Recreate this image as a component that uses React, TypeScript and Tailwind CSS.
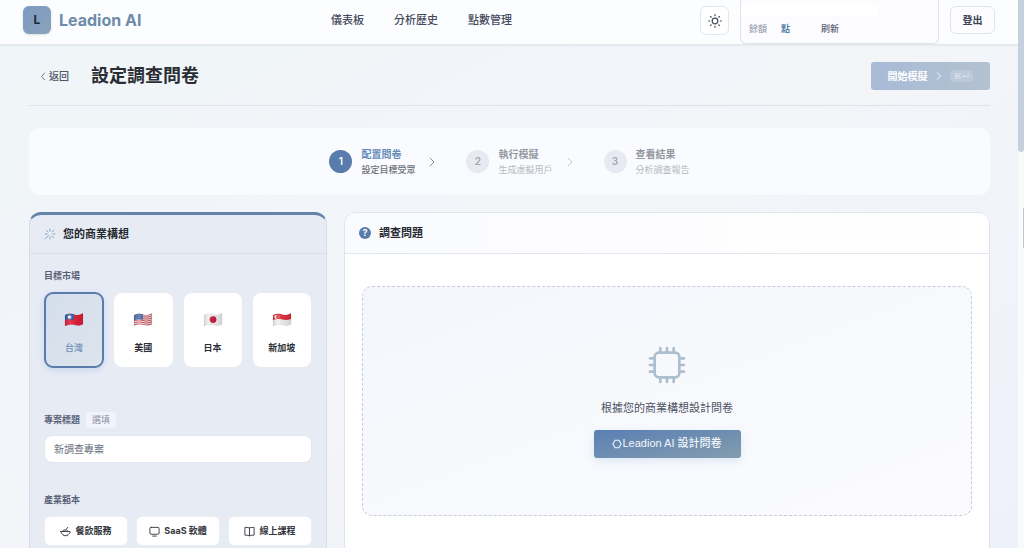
import type { ReactNode } from "react";

const waveTop = "M1 3.2C4 1.6 7 1.4 10 2.4S16 3 19 1.2V12.2C16 14 13 13.6 10 12.8S4 12.4 1 14Z";

function Flag({ id, children }: { id: string; children: ReactNode }) {
  return (
    <svg viewBox="0 0 20 15" className="h-[15px] w-5" aria-hidden="true">
      <defs>
        <clipPath id={`clip-${id}`}>
          <path d={waveTop} />
        </clipPath>
        <linearGradient id={`shade-${id}`} x1="0" x2="1" y1="0" y2="0">
          <stop offset="0" stopColor="#000" stopOpacity="0.14" />
          <stop offset="0.3" stopColor="#fff" stopOpacity="0.12" />
          <stop offset="0.65" stopColor="#000" stopOpacity="0.06" />
          <stop offset="1" stopColor="#000" stopOpacity="0.14" />
        </linearGradient>
      </defs>
      <g clipPath={`url(#clip-${id})`}>
        {children}
        <rect width="20" height="15" fill={`url(#shade-${id})`} />
      </g>
      <path d={waveTop} fill="none" stroke="#000" strokeOpacity="0.12" strokeWidth="0.5" />
    </svg>
  );
}

const markets = [
  {
    name: "台灣",
    flag: (
      <Flag id="tw">
        <rect width="20" height="15" fill="#e3203c" />
        <path d="M0 0H10V8C7 7 4 7 0 8.6Z" fill="#2d5aa8" />
        <circle cx="5.4" cy="5" r="1.5" fill="#fff" />
        <circle cx="5.4" cy="5" r="2.1" fill="none" stroke="#fff" strokeWidth="0.5" strokeDasharray="0.5 0.6" />
      </Flag>
    ),
  },
  {
    name: "美國",
    flag: (
      <Flag id="us">
        <rect width="20" height="15" fill="#f6eeee" />
        {[2.6, 4.6, 6.6, 8.6, 10.6, 12.6].map((y) => (
          <path key={y} d={`M0 ${y + 0.6}C4 ${y - 1} 7 ${y - 0.8} 10 ${y}S16 ${y + 0.6} 20 ${y - 1.2}`} fill="none" stroke="#d14a58" strokeWidth="1" />
        ))}
        <path d="M0 0H10V8C7 7 4 7 0 8.6Z" fill="#4a6aa5" />
        {[3.6, 5.6].map((y) => (
          <path key={y} d={`M2 ${y}H9.5`} stroke="#c6d2e8" strokeWidth="0.5" strokeDasharray="0.5 1" />
        ))}
      </Flag>
    ),
  },
  {
    name: "日本",
    flag: (
      <Flag id="jp">
        <rect width="20" height="15" fill="#f1f1f1" />
        <circle cx="10" cy="7.6" r="3.4" fill="#c8193c" />
      </Flag>
    ),
  },
  {
    name: "新加坡",
    flag: (
      <Flag id="sg">
        <rect width="20" height="15" fill="#f1f1f1" />
        <path d="M0 0H20V6.6C16 8.4 13 8 10 7.4S4 7 0 8.6Z" fill="#e0303c" />
        <path d="M5 3a2 2 0 1 0 0 3.8 2.4 2.4 0 0 1 0-3.8Z" fill="#fff" />
        <circle cx="6.6" cy="4.8" r="0.9" fill="none" stroke="#fff" strokeWidth="0.5" strokeDasharray="0.5 0.6" />
      </Flag>
    ),
  },
];

function Stroke({ className, children, width = 1.5 }: { className: string; children: ReactNode; width?: number }) {
  return (
    <svg
      viewBox="0 0 24 24"
      fill="none"
      stroke="currentColor"
      strokeWidth={width}
      strokeLinecap="round"
      strokeLinejoin="round"
      className={className}
      aria-hidden="true"
    >
      {children}
    </svg>
  );
}

const SunIcon = () => (
  <Stroke className="size-4" width={1.8}>
    <circle cx="12" cy="12" r="4.2" />
    <path d="M12 2.500v1.500M12 20v1.500M2.500 12H4M20 12h1.500M5.300 5.300l1 1M17.700 17.700l1 1M5.300 18.700l1-1M17.700 6.300l1-1" />
  </Stroke>
);

const Chevron = ({ className }: { className: string }) => (
  <Stroke className={className} width={2}>
    <path d="m8 4 8 8-8 8" />
  </Stroke>
);

const WandIcon = () => (
  <Stroke className="size-3 text-[#7f9fc2]" width={1.8}>
    <path d="M9.500 14.500 2 22M12 2v5M12 17.500V22M17.500 12H22M2 12h4.500M16 8l3.500-3.500M5 5l3 3M16 16l3.500 3.500" />
  </Stroke>
);

const ChipIcon = () => (
  <Stroke className="size-10 text-[#adbfce]" width={1.6}>
    <rect x="4.6" y="4.6" width="14.8" height="14.8" rx="2.4" />
    <path d="M8 1.800v2.800M12 1.800v2.800M16 1.800v2.800M8 19.400v2.800M12 19.400v2.800M16 19.400v2.800M1.800 8h2.800M1.800 12h2.800M1.800 16h2.800M19.400 8h2.800M19.400 12h2.800M19.400 16h2.800" />
  </Stroke>
);

const BowlIcon = () => (
  <Stroke className="size-[11px]" width={2}>
    <path d="M2 12h20c0 4-2.400 6-6 7.500V21H8v-1.500C4.400 18 2 16 2 12ZM6 12c0-3 2-4.500 5-3M11 9c1.500-2 4-2 5.500 3M14 7l3-4" />
  </Stroke>
);

const MonitorIcon = () => (
  <Stroke className="size-[11px]" width={2}>
    <rect x="2" y="3" width="20" height="15" rx="2.5" />
    <path d="M8 22h8" />
  </Stroke>
);

const BookIcon = () => (
  <Stroke className="size-[11px]" width={2}>
    <path d="M12 4.500C10.500 3.500 8 3 2 3v17c6 0 8.500.5 10 1.500 1.500-1 4-1.500 10-1.500V3c-6 0-8.500.5-10 1.500ZM12 4.500v17" />
  </Stroke>
);

const templates = [
  { name: "餐飲服務", icon: <BowlIcon /> },
  { name: "SaaS 軟體", icon: <MonitorIcon /> },
  { name: "線上課程", icon: <BookIcon /> },
];

const steps = [
  { title: "配置問卷", note: "設定目標受眾" },
  { title: "執行模擬", note: "生成虛擬用戶" },
  { title: "查看結果", note: "分析調查報告" },
];

function Header() {
  return (
    <header className="flex h-[45px] shrink-0 justify-between border-b border-[#e2e5ec] bg-[#fcfdfe] px-[23px] shadow-xs">
      <a href="#home" className="flex w-[308px] items-center gap-2 pb-1">
        <span className="flex size-7 items-center justify-center rounded-md bg-linear-to-br from-[#7b9ac3] to-[#8ba3ba] text-xs font-bold text-[#1d2a3d] shadow-sm">
          L
        </span>
        <span className="text-base font-bold text-[#6d8bab]">Leadion AI</span>
      </a>
      <nav className="flex flex-1 items-center gap-[30px] pb-1 text-[11px] font-medium text-[#454b5e]">
        <a href="#dashboard">儀表板</a>
        <a href="#history">分析歷史</a>
        <a href="#points">點數管理</a>
      </nav>
      <div className="flex items-start">
        <button type="button" aria-label="切換主題" className="mt-1.5 mr-[11px] flex size-[29px] items-center justify-center rounded-md border border-[#e4e6ed] bg-white text-[#454b5e]">
          <SunIcon />
        </button>
        <div className="mr-[11px] flex h-11 w-[199px] flex-col justify-between rounded-b-md border border-t-0 border-[#e0e3ea] bg-[#fcfcff] pt-1 pb-[7px] text-[9px] leading-[14px]">
          <div className="h-3 w-[138px] bg-white" />
          <div className="flex px-2">
            <span className="text-[#8b90a2]">餘額</span>
            <span className="ml-3.5 font-bold text-[#5480a8]">點</span>
            <button type="button" className="ml-[31px] font-medium text-[#5b6174]">刷新</button>
          </div>
        </div>
        <button type="button" className="mt-1.5 flex h-7 w-[45px] items-center justify-center rounded-md border border-[#e0e3ea] bg-[#fdfdff] text-[10px] font-bold text-[#3d4356]">
          登出
        </button>
      </div>
    </header>
  );
}

function Stepper() {
  return (
    <ol className="mt-[22px] flex h-[67px] items-center justify-center rounded-[10px] bg-[#fafbfe]">
      {steps.map((step, i) => {
        const active = i === 0;
        return (
          <li key={step.title} className="flex items-center">
            {i > 0 && (
              <Chevron className={i === 1 ? "mr-7 ml-[11px] size-3 text-[#8a8e99]" : "mr-7 ml-[11px] size-3 text-[#c3c6cf]"} />
            )}
            <span className={active ? "flex size-[23px] items-center justify-center rounded-full bg-[#587cab] text-[10px] font-semibold text-white" : "flex size-[23px] items-center justify-center rounded-full bg-[#e8eaf1] text-[10px] font-semibold text-[#a2a6b2]"}>
              {i + 1}
            </span>
            <span className="ml-[9px] flex flex-col">
              <span className={active ? "text-[10px] leading-4 font-bold text-[#668bb8]" : "text-[10px] leading-4 font-bold text-[#94979f]"}>{step.title}</span>
              <span className={active ? "text-[9px] leading-4 font-medium text-[#6a6e78]" : "text-[9px] leading-4 text-[#b5b8c0]"}>{step.note}</span>
            </span>
          </li>
        );
      })}
    </ol>
  );
}

function IdeaPanel() {
  return (
    <section className="overflow-hidden rounded-xl border border-t-[3px] border-[#d6dce8] border-t-[#6484aa] bg-[#e7ebf4]">
      <h2 className="flex h-[39px] items-center gap-[7px] border-b border-[#d9dee9] px-3.5 text-[11px] font-bold text-[#25282f]">
        <WandIcon />
        您的商業構想
      </h2>
      <div className="px-3.5 pt-3.5">
        <h3 className="text-[9px] leading-4 font-bold text-[#596074]">目標市場</h3>
        <div className="mt-2 grid grid-cols-4 gap-[9px]">
          {markets.map((m, i) => (
            <button
              key={m.name}
              type="button"
              aria-pressed={i === 0}
              className={
                i === 0
                  ? "flex h-[76px] flex-col items-center justify-center gap-[13px] rounded-[9px] border-2 border-[#587dac] bg-linear-to-br from-[#d4deeb] to-[#dde4ed] pt-2 text-[9px] leading-4 font-medium text-[#7190b8] shadow-[0_2px_6px_#c5d7ef]"
                  : "flex h-[76px] flex-col items-center justify-center gap-[13px] rounded-[9px] border border-[#e9ebf1] bg-white pt-2 text-[9px] leading-4 font-bold text-[#2b2e35]"
              }
            >
              {m.flag}
              {m.name}
            </button>
          ))}
        </div>

        <div className="mt-11 flex items-center gap-1.5">
          <label htmlFor="title" className="text-[9px] leading-4 font-bold text-[#596074]">專案標題</label>
          <span className="rounded-sm bg-[#f1f4fb] px-1.5 text-[9px] leading-4 text-[#8b92a3]">選填</span>
        </div>
        <input
          id="title"
          type="text"
          placeholder="新調查專案"
          className="mt-[7px] h-7 w-full rounded-lg border border-[#e2e6ee] bg-white px-[9px] text-[10px] text-[#555a68] placeholder:text-[#6a6f7d]"
        />

        <h3 className="mt-[29px] text-[9px] leading-4 font-bold text-[#596074]">產業範本</h3>
        <div className="mt-2 grid grid-cols-3 gap-2 pb-10">
          {templates.map((t) => (
            <button key={t.name} type="button" className="flex h-[30px] items-center justify-center gap-1 rounded-md border border-[#eceef4] bg-white text-[9px] font-bold text-[#33363e]">
              {t.icon}
              {t.name}
            </button>
          ))}
        </div>
      </div>
    </section>
  );
}

function SurveyPanel() {
  return (
    <section className="overflow-hidden rounded-xl border border-[#e1e4ec] bg-white">
      <h2 className="flex h-[41px] items-center gap-2 border-b border-[#e4e7ee] bg-linear-to-r from-[#fafbfe] to-white px-3.5 text-[11px] font-bold text-[#25282f]">
        <span className="flex size-3 items-center justify-center rounded-full bg-[#587cab] text-[9px] leading-3 text-white" aria-hidden="true">?</span>
        調查問題
      </h2>
      <div className="px-[17px] pt-8 pb-10">
        <div className="flex h-[230px] flex-col items-center justify-center rounded-[10px] border border-dashed border-[#c6cdd8] bg-linear-to-br from-[#f3f7fb] to-[#fbfbfe]">
          <ChipIcon />
          <p className="mt-[15px] text-[11px] leading-4 text-[#4c5162]">根據您的商業構想設計問卷</p>
          <button type="button" className="mt-3.5 flex h-7 w-[147px] items-center justify-center rounded-[3px] bg-linear-to-br from-[#5a7fb3] to-[#839caf] font-['Liberation_Sans','Noto_Sans_CJK_TC',sans-serif] text-[11px] font-medium text-[#f2f6fb] shadow-[0_3px_8px_#dbe6f3]">
            <Stroke className="size-2.5" width={2.6}>
              <path d="M7.500 3h9L22 12l-5.500 9h-9L2 12Z" />
            </Stroke>
            Leadion AI 設計問卷
          </button>
        </div>
      </div>
    </section>
  );
}

export default function App() {
  return (
    <div className="flex h-screen overflow-hidden bg-linear-to-br from-[#eff5f8] via-[#f3f5f9] to-[#eef1fa] font-[Inter,'Noto_Sans_CJK_TC',sans-serif]">
      <div className="flex min-w-0 flex-1 flex-col overflow-y-auto [scrollbar-width:none]">
        <Header />
        <main className="pr-7 pl-[29px]">
          <div className="flex h-[61px] items-center border-b border-[#dfe3e9] pt-0.5">
            <a href="#back" className="ml-2.5 flex items-center gap-px text-[10px] font-medium text-[#4c5368]">
              <Stroke className="size-[9px]" width={2}>
                <path d="m15 3-8 9 8 9" />
              </Stroke>
              返回
            </a>
            <h1 className="ml-[22px] text-lg font-bold text-[#2a2d34]">設定調查問卷</h1>
            <button type="button" className="ml-auto flex h-7 w-[119px] items-center justify-center rounded-[3px] bg-linear-to-r from-[#a8bbd7] to-[#b3c1d0] text-[10px] font-bold text-white">
              開始模擬
              <Chevron className="mx-1.5 size-2.5" />
              <kbd className="rounded-sm bg-white/15 px-1 font-[Inter,'DejaVu_Sans',sans-serif] text-[8px] leading-3 font-normal text-[#dbe4ee]">⌘↵</kbd>
            </button>
          </div>
          <Stepper />
          <div className="mt-[17px] grid grid-cols-[298fr_646fr] items-start gap-[17px]">
            <IdeaPanel />
            <SurveyPanel />
          </div>
        </main>
      </div>
      <div className="w-1.5 shrink-0 bg-[#f8fafc]">
        <div className="h-[152px] rounded-b-sm bg-[#c5d0de]" />
        <div className="mt-14 ml-auto h-10 w-px bg-[#c4c5c8]" />
      </div>
    </div>
  );
}
